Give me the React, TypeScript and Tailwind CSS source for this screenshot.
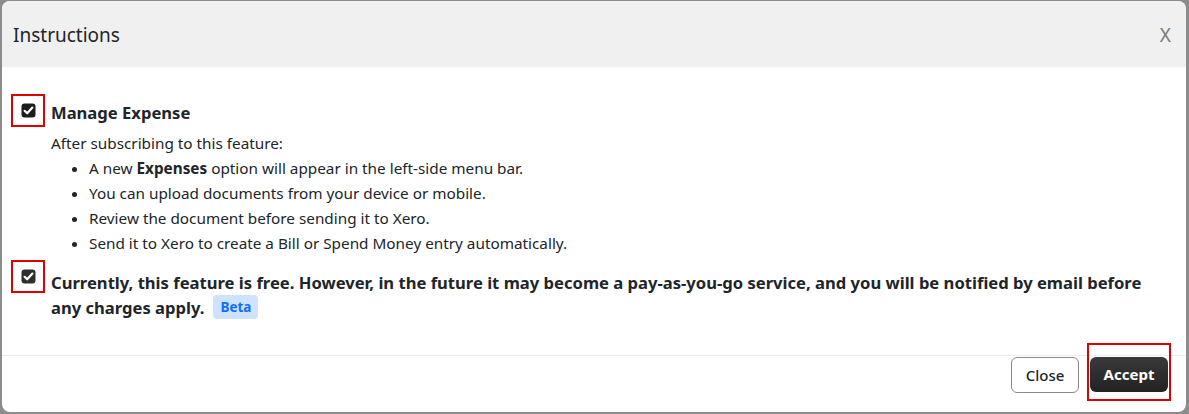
import React from "react";

const font = { fontFamily: '"Noto Sans", "Open Sans", Arial, sans-serif' };

function Tick({ dark = "#1c1c1c" }: { dark?: string }) {
  return (
    <svg width="15" height="15" viewBox="0 0 15 15">
      <rect x="0.5" y="0.5" width="14" height="14" rx="3" fill={dark} />
      <path d="M3.6 7.8 L6.2 10.3 L11.4 4.6" fill="none" stroke="#fff" strokeWidth="2.2" strokeLinecap="round" strokeLinejoin="round" />
    </svg>
  );
}

function Marked({ dark }: { dark?: string }) {
  return (
    <div className="flex h-[33px] w-[34px] shrink-0 items-center justify-center border-2 border-[#e00000]">
      <Tick dark={dark} />
    </div>
  );
}

const steps = [
  <>A new <b className="font-bold">Expenses</b> option will appear in the left-side menu bar.</>,
  <>You can upload documents from your device or mobile.</>,
  <>Review the document before sending it to Xero.</>,
  <>Send it to Xero to create a Bill or Spend Money entry automatically.</>,
];

export default function App() {
  return (
    <div className="h-[414px] w-full overflow-hidden bg-[#8c8c8c] pl-[2px] pt-[1px]" style={font}>
      <div className="flex h-[411px] w-[1184px] flex-col overflow-hidden rounded-lg bg-white text-[#212529]">
        <div className="flex h-[66px] shrink-0 items-center justify-between bg-[#f0f0f0] pl-[11px] pr-[15px] pt-[3px]">
          <h1 className="text-[19px] font-normal">Instructions</h1>
          <span className="text-[19px] text-[#7a7a7a]">X</span>
        </div>

        <div className="flex flex-1 flex-col pl-[9px] pt-[27px]">
          <div className="flex items-start">
            <Marked />
            <span className="ml-[6px] pt-[6px] text-[16.6px] font-bold leading-[25px]">Manage Expense</span>
          </div>
          <div className="ml-[40px] mt-[4px] text-[15.3px] leading-[25px]">
            <p>After subscribing to this feature:</p>
            <ul className="list-disc pl-[38px]">
              {steps.map((s, i) => (
                <li key={i}>{s}</li>
              ))}
            </ul>
          </div>
          <div className="mt-[4px] flex items-start">
            <Marked dark="#2e2e2e" />
            <p className="ml-[6px] pr-[20px] pt-[10px] text-[16.6px] font-bold leading-[25px]">
              Currently, this feature is free. However, in the future it may become a pay-as-you-go service, and you will be notified by email before any charges apply.
              <span className="ml-[9px] inline-block rounded bg-[#cfe2ff] px-[7px] align-top text-[13.5px] leading-[24px] text-[#0d6efd]">
                Beta
              </span>
            </p>
          </div>
        </div>

        <div className="flex h-[57px] shrink-0 items-start justify-end gap-[11px] border-t border-[#ececec] pr-[18px] pt-[1px]">
          <button className="h-[36px] w-[68px] rounded-md border border-[#8a8a8a] bg-white text-[15px] font-medium text-[#212529]">
            Close
          </button>
          <div className="relative">
            <button className="h-[35px] w-[78px] rounded-md bg-gradient-to-b from-[#3a3a3a] to-[#222] text-[15px] font-bold text-white">
              Accept
            </button>
            <div className="absolute -bottom-[9px] -left-[3px] -right-[3px] -top-[14px] border-2 border-[#e00000]" />
          </div>
        </div>
      </div>
    </div>
  );
}
